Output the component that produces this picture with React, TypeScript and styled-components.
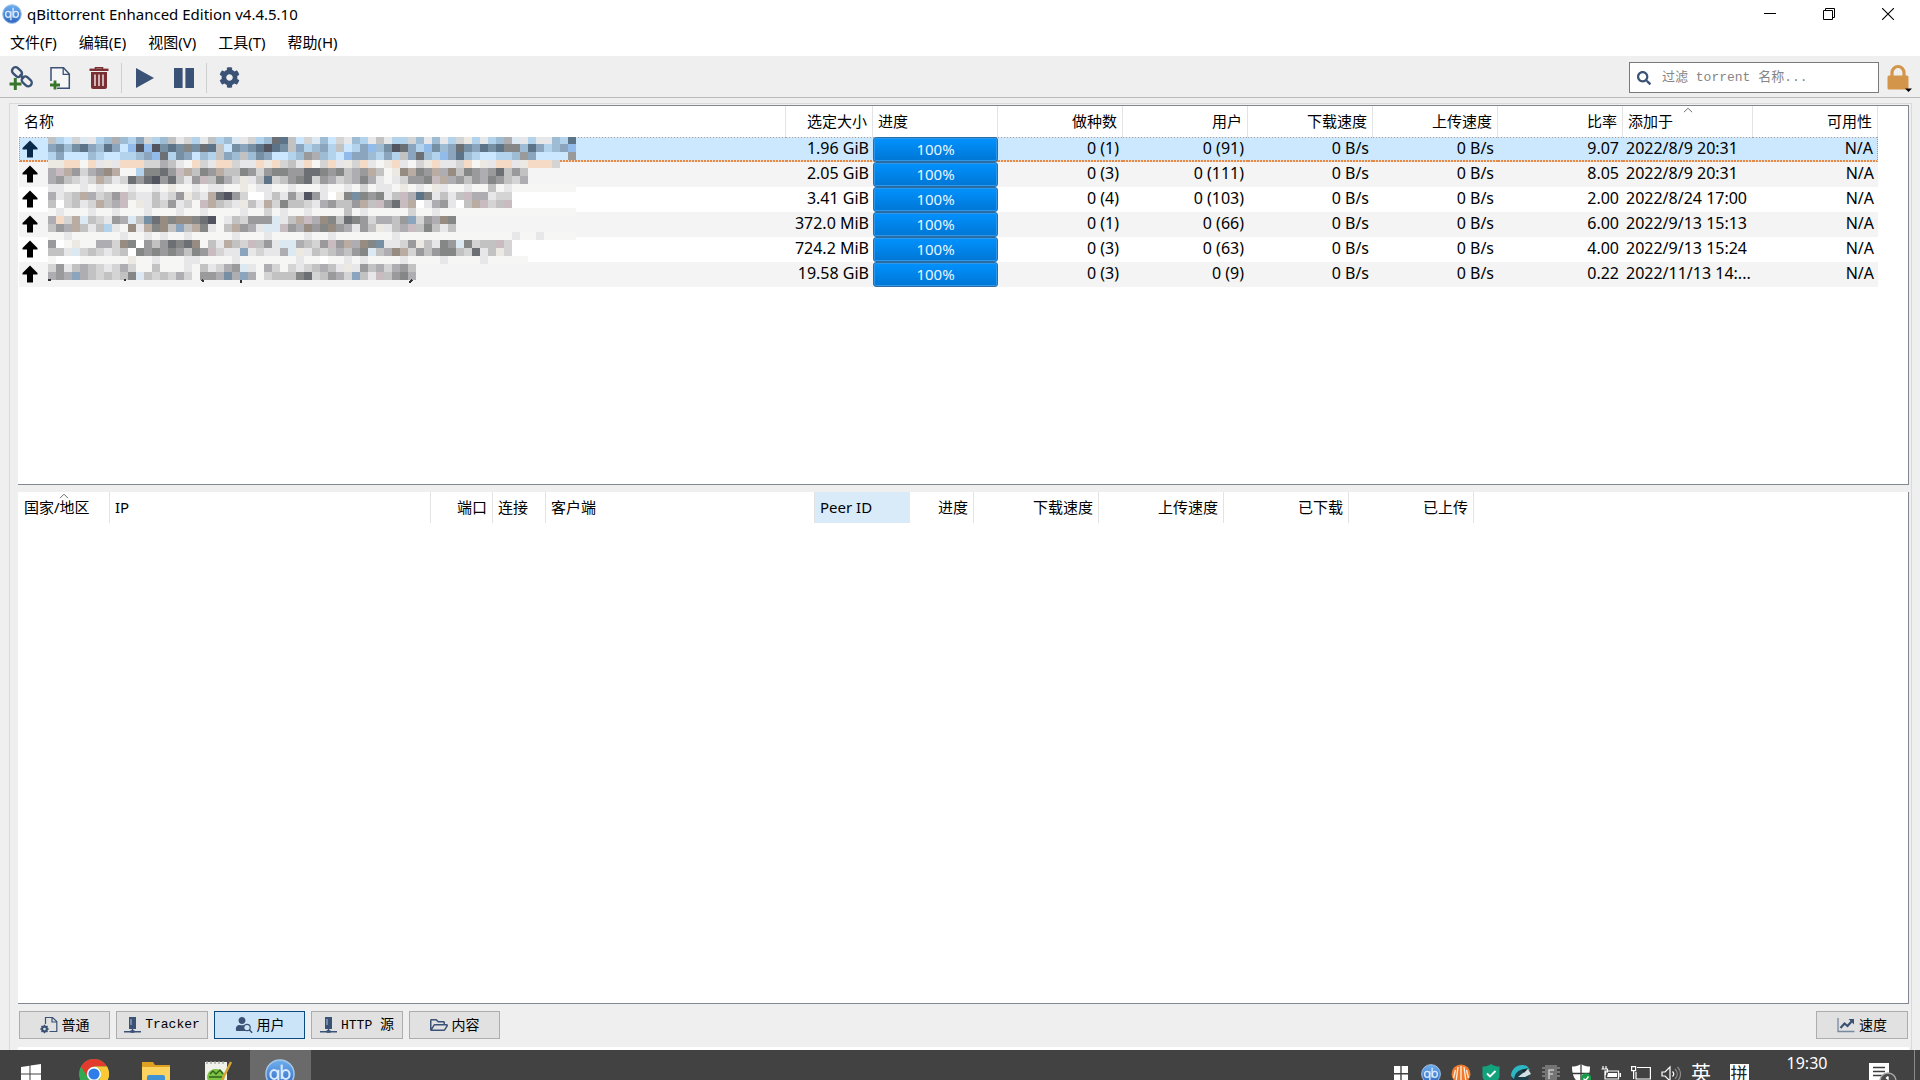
import React from "react";
import styled, { createGlobalStyle, css } from "styled-components";
import { FaCog, FaSearch, FaLock, FaRegFolderOpen, FaUser } from "react-icons/fa";

const NAVY = "#3a5275";
const SANS = `"Noto Sans", "Noto Sans CJK SC", sans-serif`;
const MONO = `"Liberation Mono", "Noto Sans CJK SC", monospace`;

const GlobalStyle = createGlobalStyle`
  * { box-sizing: border-box; }
  body { margin: 0; background: #fff; color: #000; font: 15px/20px ${SANS}; }
  button, input { font: inherit; color: inherit; }
  button { border: 0; padding: 0; background: none; }
  svg { display: block; }
`;

const Window = styled.div`
  display: flex;
  flex-direction: column;
  height: 100vh;
  overflow: hidden;
`;

const TitleBar = styled.header`
  display: flex;
  align-items: center;
  height: 28px;
  padding: 0 3px 0 2px;
`;

const Title = styled.h1`
  flex: 1;
  margin: 0 0 0 5px;
  font-size: 15px;
  font-weight: 400;
  line-height: 20px;
`;

const CaptionButton = styled.button`
  display: grid;
  place-items: center;
  width: 59px;
  height: 28px;
`;

const MenuBar = styled.nav`
  display: flex;
  height: 28px;
`;

const MenuButton = styled.button`
  padding: 0 12px 0 10px;
`;

const ToolBar = styled.div`
  display: flex;
  align-items: center;
  height: 42px;
  padding: 2px 7px 0 1px;
  background: #efefef;
  border-bottom: 1px solid #bababa;
`;

const ToolButton = styled.button`
  display: grid;
  place-items: center;
  width: 39px;
  height: 38px;
  color: ${NAVY};
`;

const ToolSeparator = styled.span`
  width: 1px;
  height: 30px;
  margin: 0 3px;
  background: #d0d0d0;
`;

const SearchBox = styled.label`
  display: flex;
  align-items: center;
  gap: 11px;
  width: 250px;
  height: 31px;
  margin-left: auto;
  padding-left: 7px;
  border: 1px solid #7a7a7a;
  background: #fff;
  color: ${NAVY};

  input {
    flex: 1;
    min-width: 0;
    padding: 0;
    border: 0;
    outline: 0;
    background: none;
    font: 13px/20px ${MONO};
  }
  input::placeholder { color: #858585; opacity: 1; }
`;

const LockButton = styled.button`
  width: 26px;
  height: 30px;
  margin-left: 8px;
  color: #d3954a;
`;

const Frame = styled.main`
  display: flex;
  flex: 1;
  flex-direction: column;
  min-height: 0;
  padding: 5px 8px 0 9px;
  background: #efefef;
`;

const FrameInner = styled.div`
  display: flex;
  flex: 1;
  flex-direction: column;
  min-height: 0;
  padding: 1px 2px 0 8px;
  border: 1px solid #dadada;
  border-bottom: 0;
`;

const Pane = styled.section<{ $basis?: number }>`
  position: relative;
  flex: ${(p) => (p.$basis ? `0 1 ${p.$basis}px` : "1 1 0")};
  min-height: 0;
  overflow: hidden;
  background: #fff;
  border: solid #828790;
  border-width: ${(p) => (p.$basis ? "1px 1px 1px 0" : "0 1px 1px 0")};
`;

const Splitter = styled.div`
  flex: 0 0 7px;
`;

const Grid = styled.table<{ $fill?: boolean }>`
  table-layout: fixed;
  width: ${(p) => (p.$fill ? "calc(100% - 31px)" : "1455px")};
  margin-left: 1px;
  border-collapse: separate;
  border-spacing: 0;
`;

type Align = "left" | "right";

const HeadCell = styled.th<{ $align: Align; $hot?: boolean }>`
  position: relative;
  height: 31px;
  padding: 0 5px 2px;
  border-right: 1px solid #e3e3e3;
  font-weight: 400;
  text-align: ${(p) => p.$align};
  white-space: nowrap;
  ${(p) => p.$hot && css`background: #d9ebf9; border-right-color: #d9ebf9;`}
`;

const SortMark = styled.svg`
  position: absolute;
  top: 1px;
  left: calc(50% - 5px);
`;

const Row = styled.tr<{ $selected?: boolean }>`
  &:nth-child(even) td { background-color: #f4f4f4; }
  ${(p) =>
    p.$selected &&
    css`
      td {
        background: repeating-linear-gradient(90deg, #e08a4c 0 2px, #f3dccb 2px 3px) 0 100% / 100% 2px no-repeat,
          repeating-linear-gradient(90deg, #a0a0a0 0 1px, #d8e4ee 1px 3px) 0 0 / 100% 1px no-repeat, #cce8ff;
      }
      td:first-child { border-left: 1px dotted #e08a4c; }
      td:last-child { border-right: 1px dotted #e08a4c; }
    `}
`;

const Cell = styled.td<{ $align?: Align }>`
  height: 25px;
  padding: 0 4px 3px 3px;
  text-align: ${(p) => p.$align ?? "right"};
  white-space: nowrap;
  font-size: 16px;
  line-height: 20px;
`;

const IconCell = styled(Cell)<{ $selected: boolean }>`
  padding: 0 0 1px ${(p) => (p.$selected ? 2 : 3)}px;
  color: ${(p) => (p.$selected ? "#0a2a4a" : "#000")};
`;

const BarCell = styled.td`
  height: 25px;
  padding: 0;
`;

const ProgressBar = styled.div`
  height: 25px;
  border: 1px solid #2a6da5;
  border-radius: 3px;
  background: linear-gradient(#0092ff, #0076d4);
  box-shadow: inset 0 0 0 1px #2f97ea;
  color: #e8f4ff;
  line-height: 23px;
  text-align: center;
`;

const Mosaic = styled.svg`
  position: absolute;
  top: 31px;
  left: 30px;
`;

const TabBar = styled.div`
  display: flex;
  gap: 6px;
  flex: 0 0 43px;
  padding: 7px 1px 8px;
`;

const TabButton = styled.button<{ $active?: boolean; $end?: boolean; $wide?: boolean }>`
  display: flex;
  align-items: center;
  justify-content: center;
  gap: 4px;
  width: ${(p) => (p.$wide ? 92 : 91)}px;
  height: 28px;
  margin-left: ${(p) => (p.$end ? "auto" : "0")};
  border: 1px solid ${(p) => (p.$active ? "#0a4a80" : "#adadad")};
  background: ${(p) => (p.$active ? "#cce4f7" : "#e1e1e1")};
  font-size: 14px;
`;

const Mono = styled.span`
  font: 13px/20px ${MONO};
  white-space: pre;
`;

const StatusEdge = styled.div`
  flex: 0 0 3px;
  background: #fff;
`;

const TaskBarClip = styled.footer`
  flex: 0 0 30px;
  overflow: hidden;
  background: #424242;
`;

const TaskBar = styled.div`
  display: flex;
  height: 48px;
  color: #fff;
`;

const AppButton = styled.button<{ $active?: boolean; $wide?: boolean }>`
  display: grid;
  place-items: center;
  width: ${(p) => (p.$wide ? 63 : 61)}px;
  height: 48px;
  margin-right: 1px;
  padding-right: 2px;
  background: ${(p) => (p.$active ? "#6a6a6a" : "transparent")};
`;

const Tray = styled.div`
  display: flex;
  align-items: center;
  margin-left: auto;
`;

const TrayButton = styled.button<{ $w?: number }>`
  display: grid;
  place-items: center;
  width: ${(p) => p.$w ?? 30}px;
  height: 48px;
  font-size: 20px;
  line-height: 24px;
`;

const ImeBox = styled.span`
  width: 19px;
  height: 20px;
  background: #fff;
  color: #222;
  font-size: 17px;
  line-height: 19px;
`;

const Clock = styled.time`
  width: 90px;
  height: 48px;
  font-size: 16px;
  line-height: 26px;
  text-align: center;
`;

const ShowDesktop = styled.button`
  width: 6px;
  height: 48px;
  border-left: 1px solid #8a8a8a;
`;

/* ---------- icons ---------- */

const QbLogo = ({ size }: { size: number }) => (
  <svg width={size} height={size} viewBox="0 0 32 32">
    <defs>
      <linearGradient id="qb" x1="0" y1="0" x2="0" y2="1">
        <stop offset="0" stopColor="#6fb0ee" />
        <stop offset="1" stopColor="#2f66c0" />
      </linearGradient>
    </defs>
    <circle cx="16" cy="16" r="15" fill="url(#qb)" stroke="#a6c8ec" strokeWidth="1.5" />
    <g fill="none" stroke="#d9eaff" strokeWidth="2.2">
      <ellipse cx="9.8" cy="16.5" rx="4" ry="4.8" />
      <path d="M14.2 11.500V26" />
      <ellipse cx="22.2" cy="16.5" rx="4" ry="4.800" />
      <path d="M17.8 6V21.500" />
    </g>
  </svg>
);

const AddLinkIcon = () => (
  <svg width="24" height="24" viewBox="0 0 24 24">
    <g fill="none" stroke={NAVY} strokeWidth="2.4">
      <rect x="2.6" y="2.6" width="11" height="7" rx="3.5" transform="rotate(42 8 6)" />
      <rect x="12.2" y="11.8" width="11" height="7" rx="3.5" transform="rotate(42 17.6 15.4)" />
      <path d="M10.5 8.5l4.5 4.2" />
    </g>
    <path d="M6.3 12v12M0.5 18h12" stroke="#38762c" strokeWidth="3" />
  </svg>
);

const AddFileIcon = () => (
  <svg width="24" height="24" viewBox="0 0 24 24">
    <path d="M3 15V1.8h12.5L21.3 8v14.2H9" fill="#f6f6f6" stroke={NAVY} strokeWidth="1.5" />
    <path d="M15.2 2v6.3h6" fill="none" stroke={NAVY} strokeWidth="1.3" />
    <path d="M7 14.5v9M2 19h10" stroke="#38762c" strokeWidth="2.8" />
  </svg>
);

const TrashIcon = () => (
  <svg width="22" height="24" viewBox="0 0 22 24">
    <path d="M1.5 3.8h19" stroke="#7a2f33" strokeWidth="2.4" />
    <path d="M7.5 3.5V1.8h7v1.7" fill="none" stroke="#7a2f33" strokeWidth="1.6" />
    <path d="M3 6h16v15a2 2 0 0 1-2 2H5a2 2 0 0 1-2-2z" fill="#7a2f33" />
    <path d="M7 8.5v11.5M11 8.5v11.5M15 8.5v11.5" stroke="#e6d6d6" strokeWidth="1.6" />
  </svg>
);

const PlayIcon = () => (
  <svg width="20" height="20" viewBox="0 0 20 20">
    <path d="M1 0v20l18-10z" fill={NAVY} />
  </svg>
);

const PauseIcon = () => (
  <svg width="20" height="20" viewBox="0 0 20 20">
    <path d="M0 0h8.6v20H0zM11.4 0H20v20h-8.6z" fill={NAVY} />
  </svg>
);

const LockIcon = () => (
  <svg width="26" height="30" viewBox="0 0 26 30">
    <path d="M5 13V9.500a6 6 0 0 1 12 0V13" fill="none" stroke="currentColor" strokeWidth="3.200" />
    <rect x="0.500" y="12.500" width="21" height="14" rx="1.500" fill="currentColor" />
    <path d="M18 25.500h7l-3.500 3.500z" fill="#000" />
  </svg>
);

const UpArrow = () => (
  <svg width="16" height="18" viewBox="0 0 16 18">
    <path d="M8 0.5L15.5 8v1.5H11V17.5H5V9.5H0.5V8z" fill="currentColor" />
  </svg>
);

const SortArrow = () => (
  <SortMark width="10" height="6" viewBox="0 0 10 6">
    <path d="M1 5.2l4-4 4 4" fill="none" stroke="#6a6a6a" strokeWidth="1" />
  </SortMark>
);

const FileGearIcon = () => (
  <svg width="18" height="18" viewBox="0 0 18 18">
    <path d="M5.5 8V1.5h7l4.3 4V15.5H9.5M12 1.5V6h4.8" fill="none" stroke={NAVY} strokeWidth="1.2" />
    <circle cx="4.5" cy="13" r="2.4" fill="none" stroke={NAVY} strokeWidth="2" />
    <path d="M4.5 8.8v8.4M0.3 13h8.4M1.5 10l6 6M7.5 10l-6 6" stroke={NAVY} strokeWidth="1.4" />
    <circle cx="4.5" cy="13" r="1.3" fill="#e1e1e1" />
  </svg>
);

const ServerIcon = () => (
  <svg width="17" height="18" viewBox="0 0 17 18">
    <path d="M5 1h7v12H5z" fill={NAVY} />
    <path d="M7 3v6" stroke="#9fb2c8" strokeWidth="1.2" />
    <path d="M8.5 13v3M0 15.8h17" stroke={NAVY} strokeWidth="1.4" />
    <path d="M6.5 15.5h4" stroke={NAVY} strokeWidth="2.6" />
  </svg>
);

const PeersIcon = () => (
  <svg width="18" height="18" viewBox="0 0 18 18">
    <FaUser x="0" y="1" size={14} color={NAVY} />
    <circle cx="12" cy="11.5" r="3.2" fill="#cce4f7" stroke={NAVY} strokeWidth="1.2" />
    <path d="M14.2 13.8l3 3" stroke={NAVY} strokeWidth="1.6" />
  </svg>
);

const GraphIcon = () => (
  <svg width="18" height="16" viewBox="0 0 18 16">
    <path d="M1 1v13.5h16.5" fill="none" stroke="#7888a0" strokeWidth="1.3" />
    <path d="M3.5 11l4-4.5 3 2.5 4.5-5" fill="none" stroke={NAVY} strokeWidth="2.2" />
    <path d="M11.5 2H17v5.5z" fill={NAVY} />
  </svg>
);

const WindowsIcon = () => (
  <svg width="20" height="20" viewBox="0 0 20 20">
    <path d="M0 3l8.5-1.2v7.7H0zM9.5 1.6L20 0v9.5H9.5zM0 10.5h8.5v7.7L0 17zM9.5 10.5H20V20L9.5 18.4z" fill="#fff" />
  </svg>
);

const ChromeIcon = () => (
  <svg width="30" height="30" viewBox="0 0 30 30">
    <circle cx="15" cy="15" r="15" fill="#33a852" />
    <path d="M2 7.5A15 15 0 0 1 28 7.5H15L9 18.5z" fill="#e33b2e" />
    <path d="M28 7.5A15 15 0 0 1 15 30l6.5-11.5V11L15 7.5z" fill="#fcc934" />
    <circle cx="15" cy="15" r="7.2" fill="#fff" />
    <circle cx="15" cy="15" r="5.6" fill="#2f7de9" />
  </svg>
);

const FolderIcon = () => (
  <svg width="28" height="24" viewBox="0 0 28 24">
    <path d="M0 0h11l2 3h15v21H0z" fill="#e0a021" />
    <path d="M0 5h28v19H0z" fill="#fbd35e" />
    <path d="M5 24v-9a2 2 0 0 1 2-2h14a2 2 0 0 1 2 2v9h-4v-6H9v6z" fill="#3f93d4" />
  </svg>
);

const NotepadIcon = () => (
  <svg width="28" height="28" viewBox="0 0 28 28">
    <path d="M1 2h22v26H1z" fill="#f1f1ec" />
    <path d="M3 1v3M7 1v3M11 1v3M15 1v3M19 1v3" stroke="#9a9a9a" strokeWidth="1.2" />
    <path d="M3 18c0-7 5-9 9-9 5 0 8 3 9 7l-2 8H5z" fill="#7cc243" />
    <path d="M6 14l3-3 3 3 4-4 3 4M5 17h13" stroke="#31621b" strokeWidth="1.4" fill="none" />
    <path d="M27 2L18 20" stroke="#d7a432" strokeWidth="2.4" />
  </svg>
);

const TilesIcon = () => (
  <svg width="14" height="16" viewBox="0 0 14 16">
    <path d="M0 0h6.3v7H0zM7.7 0H14v7H7.7zM0 8.5h6.3V16H0zM7.7 8.5H14V16H7.7z" fill="#fff" />
  </svg>
);

const BallIcon = () => (
  <svg width="20" height="20" viewBox="0 0 20 20">
    <circle cx="10" cy="10" r="9.5" fill="#ef7a2d" />
    <path d="M10 2v16M7 3L5 18M13 3l2 15M4.5 6L2.5 14M15.5 6l2 8" stroke="#fff0dc" strokeWidth="1.3" />
  </svg>
);

const GuardIcon = () => (
  <svg width="18" height="20" viewBox="0 0 18 20">
    <path d="M9 0c3 2 5 2.5 8.5 2.5V12c0 4-4 6.5-8.5 8C4.5 18.5.5 16 .5 12V2.5C4 2.5 6 2 9 0z" fill="#12a37c" />
    <path d="M5 9.5l3 3 5.5-5.5" fill="none" stroke="#fff" strokeWidth="1.8" />
  </svg>
);

const SwirlIcon = () => (
  <svg width="22" height="20" viewBox="0 0 22 20">
    <circle cx="10" cy="11" r="9" fill="#1d3f4c" />
    <path d="M1 12C1 4 9-1 17 2l3 4-6-1C8 6 5 9 4 15z" fill="#2db7c4" />
    <path d="M8 13l10-8 3 5-6 3z" fill="#d3dfe2" />
    <path d="M12 6l6-2-4 5z" fill="#1b2a30" />
  </svg>
);

const ChipIcon = () => (
  <svg width="20" height="20" viewBox="0 0 20 20">
    <path d="M4 1h12v18H4z" fill="#757575" />
    <path d="M1 4h3M1 8h3M1 12h3M16 4h3M16 8h3M16 12h3" stroke="#8b8b8b" strokeWidth="1.5" />
    <path d="M8 15V6h5M8 10h4" stroke="#c4c4c4" strokeWidth="1.5" fill="none" />
  </svg>
);

const DefenderIcon = () => (
  <svg width="20" height="20" viewBox="0 0 20 20">
    <path d="M10 0c3 2 6 2.5 9 2.5 0 8-2 14-9 17.5C3 16.5 1 10.5 1 2.5 4 2.5 7 2 10 0z" fill="#fff" />
    <path d="M10 0v20M1 9.5h18" stroke="#3a3a3a" strokeWidth="1.3" />
    <circle cx="15" cy="14.5" r="5.2" fill="#169d4a" />
    <path d="M12.5 14.5l2 2 3-4" fill="none" stroke="#fff" strokeWidth="1.4" />
  </svg>
);

const BatteryIcon = () => (
  <svg width="20" height="20" viewBox="0 0 20 20">
    <path d="M2 2v3M5 2v3M.5 5h6v3h-2v3" fill="none" stroke="#fff" strokeWidth="1.2" />
    <path d="M4 15V7h13.5v8z" fill="none" stroke="#fff" strokeWidth="1.2" />
    <path d="M7 9h9v4H6zM18.500 9H20v4h-1.500z" fill="#fff" />
  </svg>
);

const NetworkIcon = () => (
  <svg width="20" height="20" viewBox="0 0 20 20">
    <path d="M6 3.5h13.4V15H5V8" fill="none" stroke="#fff" strokeWidth="1.2" />
    <path d="M.6 2.6h4v4h-4zM2.6 6.6V15M9 18h7" fill="none" stroke="#fff" strokeWidth="1.2" />
  </svg>
);

const SpeakerIcon = () => (
  <svg width="20" height="20" viewBox="0 0 20 20">
    <path d="M1 8h3l5-5v14l-5-5H1z" fill="none" stroke="#fff" strokeWidth="1.2" />
    <path d="M11.5 7.5c1.5 1.5 1.5 3.5 0 5" fill="none" stroke="#fff" strokeWidth="1.2" />
    <path d="M14 5c3 3 3 7 0 10M16.500 3c4 4 4 10 0 14" fill="none" stroke="#8c8c8c" strokeWidth="1.2" />
  </svg>
);

const NoticeIcon = () => (
  <svg width="28" height="24" viewBox="0 0 28 24">
    <path d="M0 1h20v17H8l-4 5v-5H0z" fill="#fff" />
    <path d="M4 5.5h12M4 9.5h12M4 13.5h9" stroke="#3c3c3c" strokeWidth="1.4" />
    <circle cx="19" cy="19" r="8" fill="#4a4a4a" stroke="#a8a8a8" strokeWidth="1.4" />
    <path d="M19 14.5v8M17 16.5l2-2" stroke="#fff" strokeWidth="1.4" fill="none" />
  </svg>
);

/* ---------- censored names: one character per 8px tile ---------- */

const TILES: Record<string, string> = {
  w: "#ffffff", v: "#f6f6f5", u: "#e7e7ea", t: "#d5d4d4", s: "#c2c2c3", r: "#aeaeb2",
  q: "#9a9a9c", p: "#858686", o: "#6c6f74", n: "#525460",
  a: "#cbe6ff", b: "#b3d3ec", c: "#9ebdd4", d: "#8aa5bd", e: "#768fa2", f: "#5d7488", g: "#92bbec",
  h: "#f5dac6", i: "#ece8e2", j: "#b9aca2", k: "#978c82", l: "#c9bcc0", m: "#dce9f2",
};

const MOSAIC = [
  "sbatmubcrcbdtbcsutbusbcmutbcofsatmcatucbusubbtcucubtibubcrmubuucbf",
  "decefdcfdagngnefepeofsaedefnfesdbcdbsabdgcenodbgecdoedfefppcfdbcdg",
  "bdaaacbaabbcdgobedacbsdcscedaabcqrcbagddcbdbsdocbgdfcbaabbcqdaaaaq",
  "iihhvhuiuhhhttrsuvhtuhhtuuhihtsuhvthuithuvihuvtihuuthviuhhuihhht",
  "rljqtrqkjvvbppoqljspqjsspqtqppqqoopqpsrqjsvikjpqjrkspqrqosqs",
  "rqstutjsutoqonqosuqlsprtiusftsqpotqrtsrpruvutqqpljrqsqrpqstr",
  "uuvvuvuvvvuvvuvivvuvuuvvivuuvvuvvvuvvuvtvuuvivuviuvvuvvsvuvvvvvvvv",
  "rutsjrtsqltuusutqitujonqtwwusuqtnquwipepqpuslrfpususlrrutt",
  "swtsutjsrlviustqutvljstuisujtpssturqssqjslqoljwurquwsjltsl",
  "vuvvvuvvuvvvuvvvuvvuvvvvuvvtvuvvuvvvvsvuvvvvvtvvuvvvvvvvvvvvvvvvvv",
  "rhtjmstuqrmseokpkkponvustqqqmusjlrkpsopqtrrsqdtqrkp",
  "sqrjsusbuvkujpksdsjpuvsjqrummlqrkqpkqruqsiusrlspsus",
  "vvuvvvvvvuvvuvuvvuvvvvvuvvvuvvvvuvvuvvvvvvvuvvvvvvvvvvvvvvuvvuvvvv",
  "qwvivvrrtkpwqsqopokvsujstlsqummrstqlqjrkpeuutqisupqmptsslt",
  "ssumtstutswpqpqpqspqltuudutuurmiustsrsqpmsrkjtqsqppstousit",
  "vwwwvvvvvvivvuvvvuuvvvvuvvvvvvvuvvwvvuvuvvvvuvvvvuvvvvuvvvvv",
  "tqusrstutrtvvsvvvuvsutrqmuvrtvtutsrsuiuqsrtrqs",
  "rqrdrststspmststrtvqqrerdrvtssspotsqrtdsulsqpr",
];

const NameMosaic = () => (
  <Mosaic width="528" height="146" viewBox="0 0 528 146" shapeRendering="crispEdges" aria-hidden="true">
    {MOSAIC.map((line, r) =>
      line
        .split("")
        .map((ch, c) => (
          <rect key={`${r}-${c}`} x={c * 8} y={r === 0 ? 0 : r * 8 - 1} width="8" height={r === 0 ? 7 : 8} fill={TILES[ch]} />
        )),
    )}
    <path d="M0 143h3M76 143h2M154 143l2 2M193 143v3M361 146l3-3" stroke="#333" strokeWidth="1.5" fill="none" />
  </Mosaic>
);

/* ---------- data ---------- */

const MENUS = ["文件(F)", "编辑(E)", "视图(V)", "工具(T)", "帮助(H)"];

type Column = { label: string; width?: number; align: Align; sorted?: boolean; hot?: boolean };

const TORRENT_COLUMNS: Column[] = [
  { label: "名称", align: "left" },
  { label: "选定大小", width: 87, align: "right" },
  { label: "进度", width: 125, align: "left" },
  { label: "做种数", width: 125, align: "right" },
  { label: "用户", width: 125, align: "right" },
  { label: "下载速度", width: 125, align: "right" },
  { label: "上传速度", width: 125, align: "right" },
  { label: "比率", width: 125, align: "right" },
  { label: "添加于", width: 130, align: "left", sorted: true },
  { label: "可用性", width: 125, align: "right" },
];

const PEER_COLUMNS: Column[] = [
  { label: "国家/地区", width: 91, align: "left", sorted: true },
  { label: "IP", width: 321, align: "left" },
  { label: "端口", width: 62, align: "right" },
  { label: "连接", width: 53, align: "left" },
  { label: "客户端", width: 269, align: "left" },
  { label: "Peer ID", width: 95, align: "left", hot: true },
  { label: "进度", width: 64, align: "right" },
  { label: "下载速度", width: 125, align: "right" },
  { label: "上传速度", width: 125, align: "right" },
  { label: "已下载", width: 125, align: "right" },
  { label: "已上传", width: 125, align: "right" },
];

const TORRENTS = [
  { size: "1.96 GiB", seeds: "0 (1)", peers: "0 (91)", ratio: "9.07", added: "2022/8/9 20:31" },
  { size: "2.05 GiB", seeds: "0 (3)", peers: "0 (111)", ratio: "8.05", added: "2022/8/9 20:31" },
  { size: "3.41 GiB", seeds: "0 (4)", peers: "0 (103)", ratio: "2.00", added: "2022/8/24 17:00" },
  { size: "372.0 MiB", seeds: "0 (1)", peers: "0 (66)", ratio: "6.00", added: "2022/9/13 15:13" },
  { size: "724.2 MiB", seeds: "0 (3)", peers: "0 (63)", ratio: "4.00", added: "2022/9/13 15:24" },
  { size: "19.58 GiB", seeds: "0 (3)", peers: "0 (9)", ratio: "0.22", added: "2022/11/13 14:..." },
];

const Head = ({ columns }: { columns: Column[] }) => (
  <>
    <colgroup>
      {columns.map((c) => (
        <col key={c.label} width={c.width} />
      ))}
    </colgroup>
    <thead>
      <tr>
        {columns.map((c) => (
          <HeadCell key={c.label} scope="col" $align={c.align} $hot={c.hot}>
            {c.sorted && <SortArrow />}
            {c.label}
          </HeadCell>
        ))}
      </tr>
    </thead>
  </>
);

export default function App() {
  return (
    <Window>
      <GlobalStyle />
      <TitleBar>
        <QbLogo size={20} />
        <Title>qBittorrent Enhanced Edition v4.4.5.10</Title>
        <CaptionButton aria-label="最小化">
          <svg width="12" height="12" viewBox="0 0 12 12"><path d="M0 5.5h12" stroke="#000" /></svg>
        </CaptionButton>
        <CaptionButton aria-label="还原">
          <svg width="12" height="12" viewBox="0 0 12 12"><path d="M.5 2.5h9v9h-9zM2.5 2.5v-2h9v9h-2" fill="none" stroke="#000" /></svg>
        </CaptionButton>
        <CaptionButton aria-label="关闭">
          <svg width="12" height="12" viewBox="0 0 12 12"><path d="M0 0l12 12M12 0L0 12" stroke="#000" strokeWidth="1.1" /></svg>
        </CaptionButton>
      </TitleBar>

      <MenuBar>
        {MENUS.map((m) => (
          <MenuButton key={m}>{m}</MenuButton>
        ))}
      </MenuBar>

      <ToolBar>
        <ToolButton aria-label="添加链接"><AddLinkIcon /></ToolButton>
        <ToolButton aria-label="添加文件"><AddFileIcon /></ToolButton>
        <ToolButton aria-label="删除"><TrashIcon /></ToolButton>
        <ToolSeparator />
        <ToolButton aria-label="继续"><PlayIcon /></ToolButton>
        <ToolButton aria-label="暂停"><PauseIcon /></ToolButton>
        <ToolSeparator />
        <ToolButton aria-label="选项"><FaCog size={21} /></ToolButton>
        <SearchBox>
          <FaSearch size={14} />
          <input type="text" placeholder="过滤 torrent 名称..." aria-label="过滤" />
        </SearchBox>
        <LockButton aria-label="锁定"><LockIcon /></LockButton>
      </ToolBar>

      <Frame>
        <FrameInner>
          <Pane $basis={380}>
            <Grid $fill>
              <Head columns={TORRENT_COLUMNS} />
              <tbody>
                {TORRENTS.map((t, i) => (
                  <Row key={i} $selected={i === 0}>
                    <IconCell $selected={i === 0}><UpArrow /></IconCell>
                    <Cell>{t.size}</Cell>
                    <BarCell>
                      <ProgressBar role="progressbar" aria-valuenow={100} aria-label="进度">100%</ProgressBar>
                    </BarCell>
                    <Cell>{t.seeds}</Cell>
                    <Cell>{t.peers}</Cell>
                    <Cell>0 B/s</Cell>
                    <Cell>0 B/s</Cell>
                    <Cell>{t.ratio}</Cell>
                    <Cell $align="left">{t.added}</Cell>
                    <Cell>N/A</Cell>
                  </Row>
                ))}
              </tbody>
            </Grid>
            <NameMosaic />
          </Pane>
          <Splitter />
          <Pane>
            <Grid>
              <Head columns={PEER_COLUMNS} />
            </Grid>
          </Pane>
          <TabBar>
            <TabButton><FileGearIcon />普通</TabButton>
            <TabButton $wide><ServerIcon /><Mono>Tracker</Mono></TabButton>
            <TabButton $active><PeersIcon />用户</TabButton>
            <TabButton $wide><ServerIcon /><span><Mono>HTTP </Mono>源</span></TabButton>
            <TabButton><FaRegFolderOpen size={18} color={NAVY} />内容</TabButton>
            <TabButton $end $wide><GraphIcon />速度</TabButton>
          </TabBar>
          <StatusEdge />
        </FrameInner>
      </Frame>

      <TaskBarClip>
        <TaskBar>
          <AppButton $wide aria-label="开始"><WindowsIcon /></AppButton>
          <AppButton aria-label="Chrome"><ChromeIcon /></AppButton>
          <AppButton aria-label="文件资源管理器"><FolderIcon /></AppButton>
          <AppButton aria-label="Notepad++"><NotepadIcon /></AppButton>
          <AppButton $active aria-label="qBittorrent"><QbLogo size={30} /></AppButton>
          <Tray>
            <TrayButton aria-label="Windows"><TilesIcon /></TrayButton>
            <TrayButton aria-label="qBittorrent"><QbLogo size={20} /></TrayButton>
            <TrayButton aria-label="同步"><BallIcon /></TrayButton>
            <TrayButton aria-label="防护"><GuardIcon /></TrayButton>
            <TrayButton aria-label="加速"><SwirlIcon /></TrayButton>
            <TrayButton aria-label="设备"><ChipIcon /></TrayButton>
            <TrayButton aria-label="安全中心"><DefenderIcon /></TrayButton>
            <TrayButton aria-label="电源"><BatteryIcon /></TrayButton>
            <TrayButton aria-label="网络"><NetworkIcon /></TrayButton>
            <TrayButton aria-label="音量"><SpeakerIcon /></TrayButton>
            <TrayButton>英</TrayButton>
            <TrayButton $w={46}><ImeBox>拼</ImeBox></TrayButton>
            <Clock>19:30</Clock>
            <TrayButton $w={62} aria-label="通知"><NoticeIcon /></TrayButton>
            <ShowDesktop aria-label="显示桌面" />
          </Tray>
        </TaskBar>
      </TaskBarClip>
    </Window>
  );
}
